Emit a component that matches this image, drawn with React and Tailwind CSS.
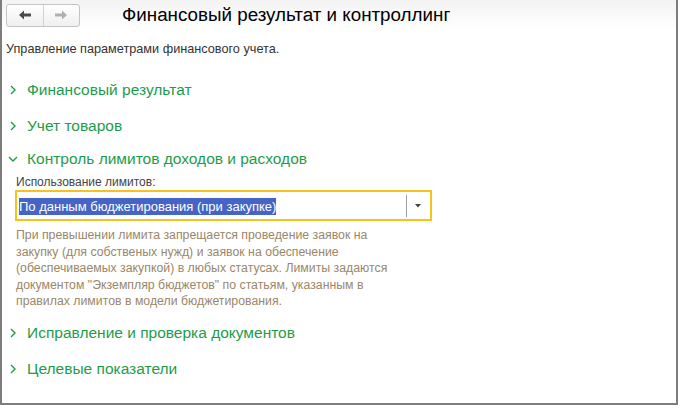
const green = "text-[#1e9c4a]";

function Chevron({ open }) {
  return open ? (
    <svg width="10" height="10" viewBox="0 0 10 10" className="mr-[9px]">
      <path d="M1 3 L5 7 L9 3" fill="none" stroke="#1e9c4a" strokeWidth="1.4" />
    </svg>
  ) : (
    <svg width="10" height="10" viewBox="0 0 10 10" className="mr-[9px]">
      <path d="M3 1 L7 5 L3 9" fill="none" stroke="#1e9c4a" strokeWidth="1.4" />
    </svg>
  );
}

function Section({ title, open, h = "h-[36px]" }) {
  return (
    <div className={`flex items-center pl-[6px] ${h}`}>
      <Chevron open={open} />
      <span className={`text-[15.5px] ${green}`}>{title}</span>
    </div>
  );
}

function NavButtons() {
  return (
    <div className="flex h-[23px] w-[74px] rounded-[3px] border border-[#c4c4c4] bg-gradient-to-b from-white to-[#efefef]">
      <div className="flex flex-1 items-center justify-center border-r border-[#d2d2d2]">
        <svg width="12" height="10" viewBox="0 0 12 10">
          <path d="M0 5 L5 0.5 L5 3.5 L12 3.5 L12 6.5 L5 6.5 L5 9.5 Z" fill="#4a4a4a" />
        </svg>
      </div>
      <div className="flex flex-1 items-center justify-center">
        <svg width="12" height="10" viewBox="0 0 12 10">
          <path d="M12 5 L7 0.5 L7 3.5 L0 3.5 L0 6.5 L7 6.5 L7 9.5 Z" fill="#b0b0b0" />
        </svg>
      </div>
    </div>
  );
}

export default function App() {
  return (
    <div
      className="w-[678px] h-[405px] border-l-2 border-r-2 border-b-2 border-[#7d7d7d] bg-white text-[#333] overflow-hidden"
      style={{ fontFamily: '"Liberation Sans", Arial, sans-serif' }}
    >
      <div className="flex items-center h-[30px] pl-[4px] bg-gradient-to-b from-[#f3f3f3] to-white">
        <NavButtons />
        <div className="ml-[42px] text-[18.8px] text-black leading-none">
          Финансовый результат и контроллинг
        </div>
      </div>

      <div className="mt-[11px] pl-[4px] h-[16px] leading-[16px] text-[12.7px] text-[#333]">
        Управление параметрами финансового учета.
      </div>

      <div className="mt-[15px]">
        <Section title="Финансовый результат" />
        <Section title="Учет товаров" />
        <Section title="Контроль лимитов доходов и расходов" open h="h-[30px]" />

        <div className="pl-[13px]">
          <div className="h-[16px] leading-[16px] text-[12px] text-[#444] pl-[1px]">
            Использование лимитов:
          </div>
          <div className="flex items-center w-[417px] h-[31px] border-2 border-[#f5c41c] pl-[2px] pr-[9px]">
            <div className="flex-1">
              <span className="bg-[#4564c6] text-white text-[13px] leading-[17px] inline-block">
                По данным бюджетирования (при закупке)
              </span>
            </div>
            <div className="h-[22px] w-px bg-[#a0a0a0] mr-[8px]" />
            <svg width="6" height="4" viewBox="0 0 6 4">
              <path d="M0 0 L6 0 L3 3.5 Z" fill="#444" />
            </svg>
          </div>
          <div className="mt-[6px] pl-[1px] w-[392px] text-[12.3px] leading-[16.5px] text-[#9a8769]">
            При превышении лимита запрещается проведение заявок на закупку (для собственых нужд) и заявок на обеспечение
            (обеспечиваемых закупкой) в любых статусах. Лимиты задаются документом "Экземпляр бюджетов" по статьям,
            указанным в правилах лимитов в модели бюджетирования.
          </div>
        </div>

        <div className="mt-[5px]">
          <Section title="Исправление и проверка документов" />
          <Section title="Целевые показатели" />
        </div>
      </div>
    </div>
  );
}
